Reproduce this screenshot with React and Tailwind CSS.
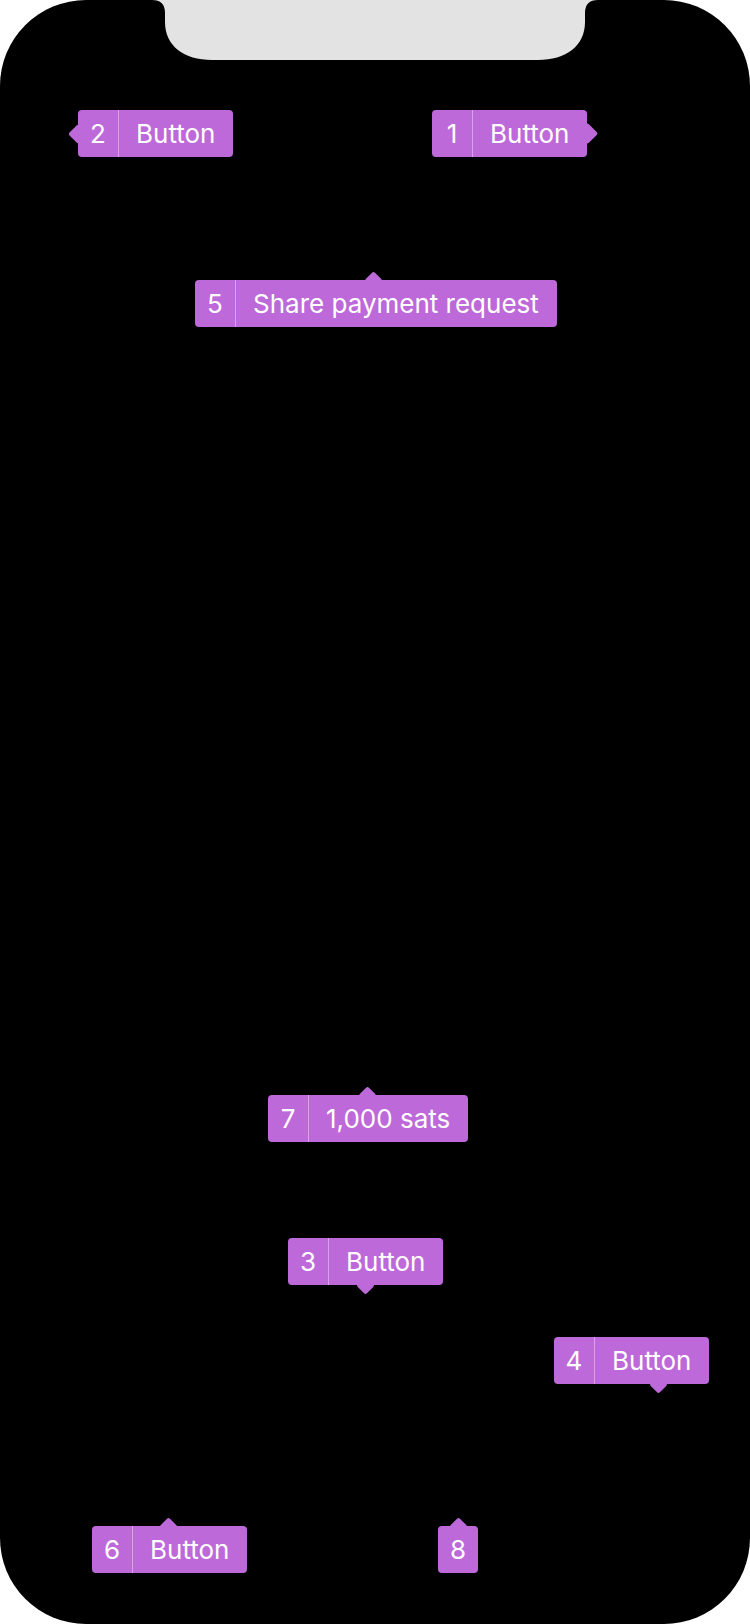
import React from "react";

function Arrow({ dir, pos }) {
  const base = "absolute bg-[#bd69d9] rotate-45 rounded-[2px]";
  if (dir === "up") {
    return <div className={`${base} w-[13px] h-[13px]`} style={{ left: pos - 6.5, top: -6.5 }} />;
  }
  if (dir === "down") {
    return <div className={`${base} w-[13px] h-[13px]`} style={{ left: pos - 6.5, bottom: -6.5 }} />;
  }
  if (dir === "left") {
    return <div className={`${base} w-[14px] h-[14px] left-[-7px] top-[16.5px]`} />;
  }
  return <div className={`${base} w-[15px] h-[15px] right-[-8px] top-[16px]`} />;
}

function Tag({ x, y, num, text, arrow }) {
  return (
    <div className="absolute" style={{ left: x, top: y }}>
      <div className="relative">
        {arrow && <Arrow dir={arrow.dir} pos={arrow.pos} />}
        <div className="relative flex h-[47px] items-stretch rounded-[4px] bg-[#bd69d9] text-white text-[26px] leading-none font-['Inter',sans-serif]">
          <div className="flex w-[40px] items-center justify-center">{num}</div>
          {text && (
            <div className="flex items-center border-l border-[#d9a2eb] pl-[17px] pr-[18px]">
              {text}
            </div>
          )}
        </div>
      </div>
    </div>
  );
}

export default function App() {
  return (
    <div className="relative h-[1624px] w-[750px] overflow-hidden bg-white">
      <div className="absolute inset-0 overflow-hidden rounded-[86px] bg-black">
        <svg
          className="absolute left-0 top-0"
          width="750"
          height="62"
          viewBox="0 0 750 62"
        >
          <path
            d="M152 0 Q165 0 165 13 L165 22 C165 46 184 60 212 60 L538 60 C566 60 585 46 585 22 L585 13 Q585 0 598 0 Z"
            fill="#e3e3e3"
          />
        </svg>

        <Tag x={78} y={110} num="2" text="Button" arrow={{ dir: "left" }} />
        <Tag x={432} y={110} num="1" text="Button" arrow={{ dir: "right" }} />
        <Tag
          x={195}
          y={280}
          num="5"
          text="Share payment request"
          arrow={{ dir: "up", pos: 178 }}
        />
        <Tag
          x={268}
          y={1095}
          num="7"
          text="1,000 sats"
          arrow={{ dir: "up", pos: 99 }}
        />
        <Tag
          x={288}
          y={1238}
          num="3"
          text="Button"
          arrow={{ dir: "down", pos: 77 }}
        />
        <Tag
          x={554}
          y={1337}
          num="4"
          text="Button"
          arrow={{ dir: "down", pos: 104 }}
        />
        <Tag
          x={92}
          y={1526}
          num="6"
          text="Button"
          arrow={{ dir: "up", pos: 76 }}
        />
        <Tag x={438} y={1526} num="8" arrow={{ dir: "up", pos: 20 }} />
      </div>
    </div>
  );
}
